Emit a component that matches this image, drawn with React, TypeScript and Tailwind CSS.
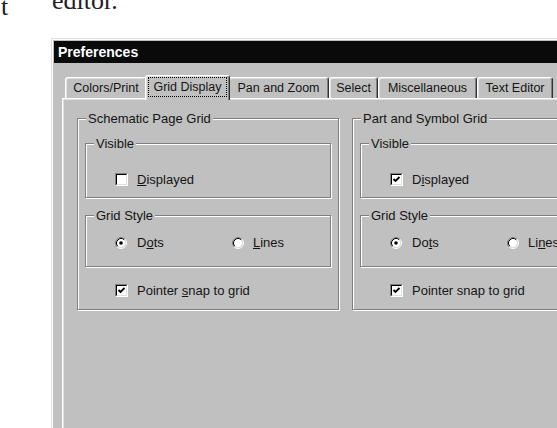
import type { ReactNode } from "react";

const TABS = [
  { label: "Colors/Print", width: "w-[82px]" },
  { label: "Grid Display", width: "w-[85px]", active: true },
  { label: "Pan and Zoom", width: "w-[101px]" },
  { label: "Select", width: "w-[49px]" },
  { label: "Miscellaneous", width: "w-[99px]" },
  { label: "Text Editor", width: "w-[76px]" }
];

function Tab({ label, width, active }: { label: string; width: string; active?: boolean }) {
  if (active) {
    return (
      <div
        className={`relative z-10 -mx-[2px] -mb-[2px] flex h-[25px] ${width} rounded-t-[3px] border-t border-l border-white border-r border-r-[#303030] bg-[#c0c0c0] px-[2px] pt-[1px] pb-[3px] shadow-[inset_-1px_0_0_#808080,inset_1px_1px_0_#dfdfdf]`}
      >
        <span className="flex flex-1 items-center justify-center border border-dotted border-black">{label}</span>
      </div>
    );
  }
  return (
    <div
      className={`flex h-[21px] ${width} items-center justify-center rounded-t-[3px] border-t border-l border-white border-r border-r-[#303030] shadow-[inset_-1px_0_0_#808080,inset_1px_1px_0_#dfdfdf]`}
    >
      {label}
    </div>
  );
}

function Box({ checked }: { checked: boolean }) {
  return (
    <span className="flex h-[13px] w-[13px] shrink-0 border border-t-[#808080] border-l-[#808080] border-r-white border-b-white">
      <span className="flex flex-1 border border-t-black border-l-black border-r-[#dfdfdf] border-b-[#dfdfdf] bg-white">
        {checked && (
          <svg width="9" height="9" viewBox="0 0 9 9">
            <path d="M1.5 4 L3.5 6 L7.5 2" stroke="black" strokeWidth="1.8" fill="none" />
          </svg>
        )}
      </span>
    </span>
  );
}

function Radio({ on }: { on: boolean }) {
  return (
    <svg width="12" height="12" viewBox="0 0 12 12" className="shrink-0">
      <circle cx="6" cy="6" r="4.2" fill="white" />
      <path d="M9.89 2.11 A5.5 5.5 0 0 0 2.11 9.89" stroke="#808080" fill="none" />
      <path d="M2.11 9.89 A5.5 5.5 0 0 0 9.89 2.11" stroke="#ffffff" fill="none" />
      <path d="M9.18 2.82 A4.5 4.5 0 0 0 2.82 9.18" stroke="#000000" fill="none" />
      <path d="M2.82 9.18 A4.5 4.5 0 0 0 9.18 2.82" stroke="#dfdfdf" fill="none" />
      {on && <circle cx="6" cy="6" r="1.8" fill="black" />}
    </svg>
  );
}

function Group({
  title,
  className,
  bodyClass,
  children
}: {
  title: string;
  className?: string;
  bodyClass?: string;
  children: ReactNode;
}) {
  return (
    <div className={`border border-[#808080] shadow-[1px_1px_0_#fff,inset_1px_1px_0_#fff] ${className ?? ""}`}>
      <div className="-mt-[8px] ml-[8px] w-fit bg-[#c0c0c0] px-[2px] leading-[15px]">{title}</div>
      <div className={bodyClass}>{children}</div>
    </div>
  );
}

function GridGroup({ title, displayed, mn }: { title: string; displayed: boolean; mn: "left" | "right" }) {
  const left = mn === "left";
  return (
    <Group title={title} className="w-[262px] shrink-0 text-[13px]" bodyClass="px-[7px] pb-[11px]">
      <Group title="Visible" className="mt-[17px]" bodyClass="pb-[10px] pl-[29px]">
        <div className="mt-[21px] flex h-[15px] items-center gap-[9px]">
          <Box checked={displayed} />
          {left ? (
            <span><u>D</u>isplayed</span>
          ) : (
            <span>D<u>i</u>splayed</span>
          )}
        </div>
      </Group>
      <Group title="Grid Style" className="mt-[17px]" bodyClass="pb-[16px] pl-[29px]">
        <div className="mt-[12px] flex h-[15px] items-center">
          <div className="flex w-[117px] items-center gap-[10px]">
            <Radio on />
            {left ? <span>D<u>o</u>ts</span> : <span>Do<u>t</u>s</span>}
          </div>
          <div className="flex items-center gap-[9px]">
            <Radio on={false} />
            {left ? <span><u>L</u>ines</span> : <span>Li<u>n</u>es</span>}
          </div>
        </div>
      </Group>
      <div className="mt-[16px] flex h-[15px] items-center gap-[9px] pl-[30px]">
        <Box checked />
        {left ? <span>Pointer <u>s</u>nap to grid</span> : <span>Pointer snap to grid</span>}
      </div>
    </Group>
  );
}

export default function App() {
  return (
    <div className="h-[428px] w-[557px] overflow-hidden bg-white font-['Liberation_Sans',Arial,sans-serif] text-[12.5px] text-[#151515]">
      <div className="flex h-[38px] overflow-hidden font-['Liberation_Serif','Times_New_Roman',serif] text-[26px] leading-[26px] text-[#222]">
        <span className="-mt-[6px] w-[52px] pl-[1px]">t</span>
        <span className="-mt-[12px]">editor.</span>
      </div>

      <div className="ml-[51px] h-[390px] bg-[#c0c0c0] pl-[3px] pt-[3px] shadow-[inset_1px_1px_0_#dfdfdf,inset_2px_2px_0_#fff]">
        <div className="flex h-[22px] items-center bg-[#0a0a0a] pl-[4px] text-[14px] font-bold text-white">
          Preferences
        </div>

        <div className="ml-[8px] mt-[12px]">
          <div className="flex items-end pl-[3px]">
            {TABS.map((t) => (
              <Tab key={t.label} label={t.label} width={t.width} active={t.active} />
            ))}
          </div>

          <div className="h-[340px] pl-[15px] pt-[20px] shadow-[inset_1px_1px_0_#fff,inset_2px_2px_0_#dfdfdf]">
            <div className="flex items-start gap-[13px]">
              <GridGroup title="Schematic Page Grid" displayed={false} mn="left" />
              <GridGroup title="Part and Symbol Grid" displayed mn="right" />
            </div>
          </div>
        </div>
      </div>
    </div>
  );
}
